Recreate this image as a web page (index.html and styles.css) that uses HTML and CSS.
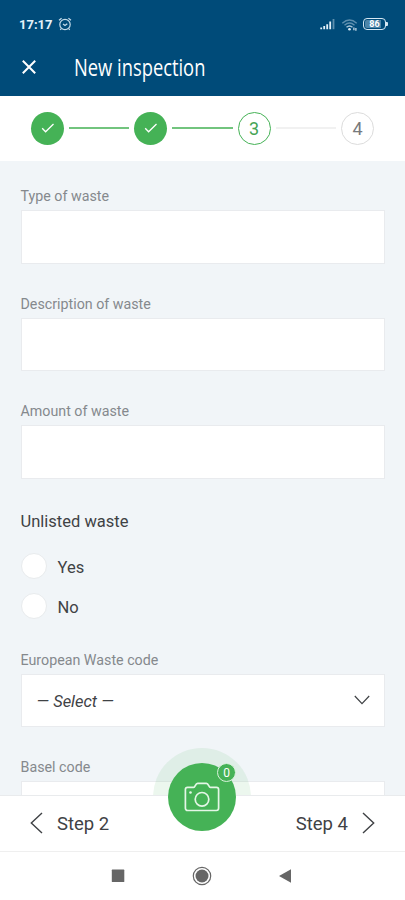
FILE: index.html
```html
<!DOCTYPE html>
<html lang="en">
<head>
<meta charset="utf-8">
<title>New inspection</title>
<link rel="stylesheet" href="styles.css">
</head>
<body>
<div class="app">
  <header class="header">
    <div class="status">
      <span class="clock">17:17</span>
      <svg class="alarm" width="14" height="14" viewBox="0 0 14 14"><circle cx="7" cy="7.5" r="5.2"/><path d="M1 3.3 3.6 1.2M10.4 1.2 13 3.3M5 7l2 1.5L9.3 6.7M3.3 11.6l-1 1.3M10.7 11.6l1 1.3"/></svg>
      <svg class="signal" width="16" height="12" viewBox="0 0 16 12"><path d="M1.2 9.5v1.7M4.2 8v3.2M7.2 6.2v5M10.2 3.5v7.7"/><path class="dim" d="M13.5 1v10.2"/></svg>
      <svg class="wifi" width="18" height="14" viewBox="0 0 18 14"><path class="dim" d="M1.3 5.3Q8.5-1.2 15.7 5.3M3.5 7.2Q8.5 2.7 13.5 7.2"/><path d="M5.5 9.3Q8.5 6.6 11.5 9.3"/><circle cx="8.5" cy="11.2" r="1.3"/><path class="arrows" d="M12.900 9.500v2.800M14.900 10V12.800"/></svg>
      <span class="battery"><span class="level">86</span></span>
    </div>
    <div class="titlebar">
      <svg class="close" width="16" height="16" viewBox="0 0 16 16"><path d="M1.8 1.8 14.2 14.2M14.2 1.8 1.8 14.2"/></svg>
      <h1 class="title">New inspection</h1>
    </div>
  </header>
  <div class="stepper">
    <span class="step done"><svg width="14" height="12" viewBox="0 0 14 12"><path d="M1.2 6.3 4.6 9.8 12.5 2"/></svg></span>
    <span class="line"></span>
    <span class="step done"><svg width="14" height="12" viewBox="0 0 14 12"><path d="M1.2 6.3 4.6 9.8 12.5 2"/></svg></span>
    <span class="line"></span>
    <span class="step current">3</span>
    <span class="line pending"></span>
    <span class="step upcoming">4</span>
  </div>
  <main class="form">
    <div class="field"><div class="label">Type of waste</div><div class="input"></div></div>
    <div class="field"><div class="label">Description of waste</div><div class="input"></div></div>
    <div class="field"><div class="label">Amount of waste</div><div class="input"></div></div>
    <div class="group">
      <div class="legend">Unlisted waste</div>
      <div class="option"><span class="radio"></span><span class="choice">Yes</span></div>
      <div class="option"><span class="radio"></span><span class="choice">No</span></div>
    </div>
    <div class="field"><div class="label">European Waste code</div>
      <div class="input select"><span class="choice">— Select —</span><svg width="16" height="10" viewBox="0 0 16 10"><path d="M.8 1 8 8.6 15.2 1"/></svg></div>
    </div>
    <div class="field"><div class="label">Basel code</div><div class="input"></div></div>
    <div class="halo"></div>
  </main>
  <nav class="steps-nav">
    <span class="nav-item"><svg width="13" height="22" viewBox="0 0 13 22"><path d="M12 1 1.3 11 12 21"/></svg>Step 2</span>
    <span class="nav-item">Step 4<svg width="13" height="22" viewBox="0 0 13 22"><path d="M1 1l10.7 10L1 21"/></svg></span>
    <div class="camera">
      <svg width="36" height="30" viewBox="0 0 36 30"><path d="M3.6 5.3h6c1.7 0 1.7-4 4-4h8.8c2.300 0 2.300 4 4 4h6a2.200 2.200 0 0 1 2.200 2.200v18.800a2.200 2.200 0 0 1-2.200 2.200H3.600a2.200 2.200 0 0 1-2.200-2.200V7.500a2.200 2.200 0 0 1 2.200-2.200z"/><circle cx="18" cy="17.300" r="6.800"/><circle class="dot" cx="6.500" cy="10.500" r="1.300"/></svg>
      <span class="badge">0</span>
    </div>
  </nav>
  <div class="system">
    <svg width="14" height="14" viewBox="0 0 14 14"><rect x=".8" y=".6" width="12.500" height="12.500" rx=".6"/></svg>
    <svg width="20" height="20" viewBox="0 0 20 20"><circle cx="10" cy="10" r="6.500"/><circle class="ring" cx="10" cy="10" r="8.700"/></svg>
    <svg width="14" height="14" viewBox="0 0 14 14"><path d="M13 .3v13.400L1 7z"/></svg>
  </div>
</div>
</body>
</html>
```
FILE: styles.css
```css
* { box-sizing: border-box; }
body { margin: 0; font-family: Roboto, "Liberation Sans", sans-serif; color: #3f4245; }
svg { display: block; fill: none; flex: none; }
.app { width: 405px; height: 900px; display: flex; flex-direction: column; overflow: hidden; background: #fff; }

.header { height: 96px; flex: none; background: #004b79; color: #fff; padding-top: 15px; }
.status { height: 18px; display: flex; align-items: center; padding: 0 17px 0 19px; }
.clock { font-size: 13px; font-weight: 700; letter-spacing: 0; width: 39px; color: #e4f1fa; }
.alarm { stroke: #c5dcea; stroke-width: 1.2; }
.signal { margin-left: auto; stroke: #e4f1fa; stroke-width: 1.8; }
.wifi { margin: 2px 4px 0 5px; stroke: #a9c6d9; stroke-width: 1.4; }
.wifi circle { fill: #e4f1fa; stroke: none; }
.wifi .arrows { stroke: #d4e5f0; stroke-width: 1.2; }
.signal .dim, .wifi .dim { stroke: #5d8fae; }
.battery { position: relative; width: 23px; height: 12px; border: 1.5px solid #d6e8f3; border-radius: 4px; padding: 1px; margin-right: 2px; }
.battery::after { content: ""; position: absolute; right: -3px; top: 3px; width: 2px; height: 4px; background: #d6e8f3; border-radius: 0 1px 1px 0; }
.level { display: block; height: 8px; line-height: 8px; border-radius: 2px; background: linear-gradient(90deg, #4d85a8 86%, transparent 86%); text-align: center; font-size: 9px; font-weight: 700; }
.titlebar { display: flex; align-items: center; height: 34px; margin-top: 17px; padding-left: 21px; }
.close { stroke: #fff; stroke-width: 2; }
.title { margin: 0 0 0 37px; font: 400 23.500px/34px "Open Sans", "Noto Sans", sans-serif; transform: scaleX(.78); transform-origin: left center; white-space: nowrap; }

.stepper { height: 65px; flex: none; display: flex; align-items: center; padding: 0 31px; }
.step { width: 33px; height: 33px; flex: none; border-radius: 50%; display: flex; align-items: center; justify-content: center; font-size: 18px; margin-top: -1px; }
.done { background: #45b256; }
.done svg { stroke: #fff; stroke-width: 1.3; }
.current { border: 1.300px solid #45b256; color: #45a455; padding-top: 1px; }
.upcoming { border: 1px solid #dcdcdc; color: #777a7d; padding-top: 1px; }
.line { flex: 1; height: 1.500px; margin: -1px 5px 0; background: #72c47e; }
.pending { background: #f1f1f1; }

.form { position: relative; height: 634px; flex: none; overflow: hidden; background: #f1f5f8; padding: 26px 20.500px 0; }
.field { height: 107.700px; }
.label { font-size: 14.250px; line-height: 19px; height: 23px; color: #85898d; }
.input { height: 53.500px; background: #fff; border: 1px solid #e9ebee; }
.select { display: flex; align-items: center; justify-content: space-between; padding: 0 14px 0 15px; font-size: 16.500px; font-style: italic; }
.select svg { stroke: #3f4245; stroke-width: 1.200; }
.choice { padding-top: 2px; }
.group { height: 140.500px; padding-top: 1px; font-size: 16.500px; }
.legend { height: 35px; line-height: 21px; }
.option { display: flex; align-items: center; height: 40px; }
.radio { width: 26px; height: 26px; border-radius: 50%; background: #fff; border: 1px solid #e8ebed; margin-right: 11px; }
.halo { position: absolute; left: 153px; top: 587px; width: 98px; height: 98px; border-radius: 50%; background: rgba(69, 178, 86, .1); }

.steps-nav { position: relative; height: 57px; flex: none; border-top: 1px solid #e9ebed; border-bottom: 1px solid #efefef; display: flex; align-items: center; justify-content: space-between; padding: 0 30px; font-size: 18.500px; }
.nav-item { display: flex; align-items: center; gap: 14px; }
.nav-item svg { stroke: #3f4245; stroke-width: 1.400; margin-top: -2px; }
.camera { position: absolute; left: 168px; top: -33px; width: 68px; height: 68px; border-radius: 50%; background: #45b256; display: flex; align-items: center; justify-content: center; }
.camera svg { stroke: #e4f6e6; stroke-width: 1.700; }
.camera .dot { fill: #e4f6e6; stroke: none; }
.badge { position: absolute; left: 49px; top: 0; width: 19px; height: 19px; border: 1px solid #d9f2dc; border-radius: 50%; background: #45b256; color: #fff; font-size: 12px; line-height: 18px; text-align: center; }

.system { height: 48px; display: flex; align-items: center; justify-content: center; gap: 66.500px; padding-right: 1.500px; }
.system svg { fill: #666; }
.system .ring { fill: none; stroke: #666; stroke-width: 1.200; }
```
